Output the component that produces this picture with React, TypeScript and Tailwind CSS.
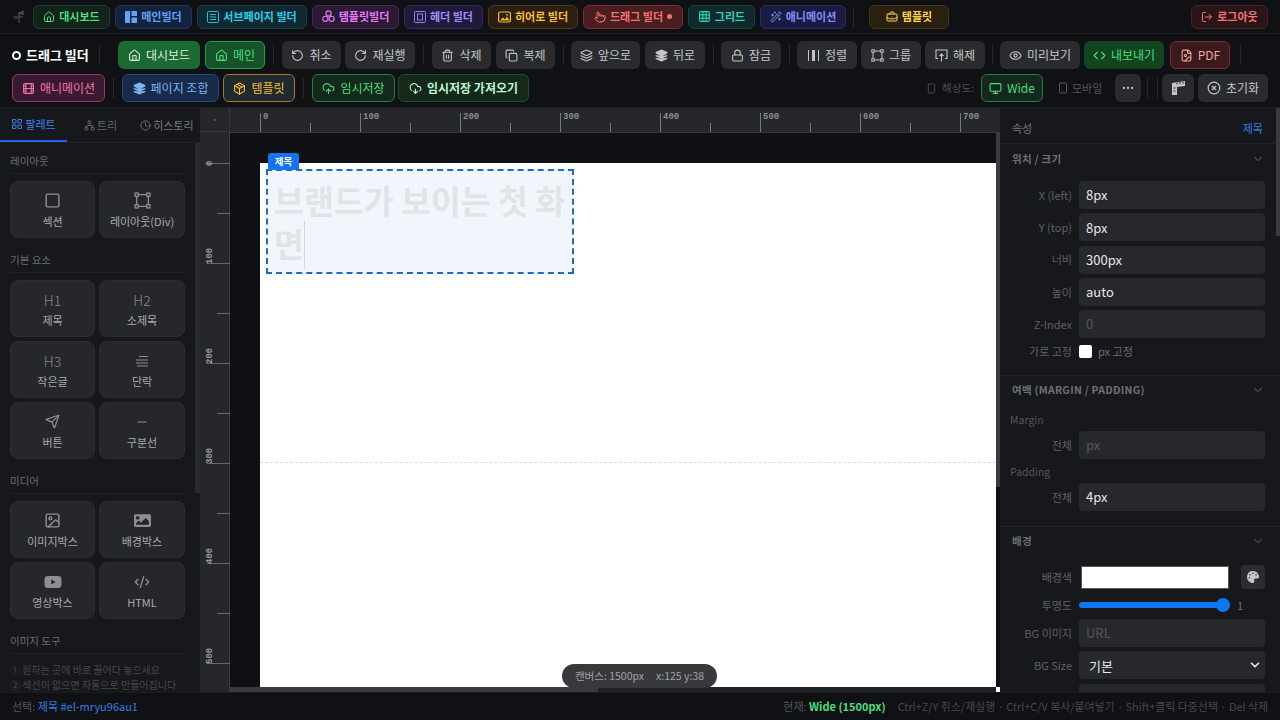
import type { ReactNode } from "react";
import {
  ChevronDown, CircleX, Clock, CodeXml, Copy, Code, CloudDownload, CloudUpload, Ellipsis, Eye, FileImage,
  Film, Grid3x3, House, Image, Layers, LayoutGrid, Lock, LogOut, Minus, Monitor, Network, Package,
  Pointer, RotateCcw, RotateCw, Send, Smartphone, Square, Trash2, WandSparkles, BriefcaseBusiness,
} from "lucide-react";
import { FaPalette, FaYoutube, FaImage } from "react-icons/fa";

const font = { fontFamily: '"Noto Sans CJK KR", "Noto Sans", sans-serif' };

// icons the packages don't have in this shape
function CornerBox({ size = 13 }: { size?: number }) {
  return (
    <svg width={size} height={size} viewBox="0 0 16 16" fill="none" stroke="currentColor" strokeWidth="1.2">
      <rect x="1" y="1" width="3" height="3" /><rect x="12" y="1" width="3" height="3" />
      <rect x="1" y="12" width="3" height="3" /><rect x="12" y="12" width="3" height="3" />
      <path d="M4 2.5h8M4 13.5h8M2.5 4v8M13.5 4v8" />
    </svg>
  );
}

function SplitBlocks() {
  return (
    <svg width="12" height="12" viewBox="0 0 12 12" fill="currentColor">
      <rect x="0" y="0" width="5" height="12" rx="0.5" /><rect x="6.5" y="0" width="5.5" height="5" rx="0.5" /><rect x="6.5" y="6.5" width="5.5" height="5.5" rx="0.5" />
    </svg>
  );
}

function FramedLines() {
  return (
    <svg width="12" height="12" viewBox="0 0 12 12" fill="none" stroke="currentColor" strokeWidth="0.9">
      <rect x="0.5" y="0.5" width="11" height="11" rx="1" /><path d="M3 3.5h6M3 6h6M3 8.5h6" />
    </svg>
  );
}

function HeaderBox() {
  return (
    <svg width="12" height="12" viewBox="0 0 12 12" fill="none" stroke="currentColor" strokeWidth="0.9">
      <rect x="0.5" y="0.5" width="11" height="11" rx="1" /><rect x="3.5" y="3" width="5" height="6" />
    </svg>
  );
}

function Clover() {
  return (
    <svg width="13" height="13" viewBox="0 0 13 13" fill="none" stroke="currentColor" strokeWidth="1.1">
      <circle cx="6.5" cy="3.5" r="2.6" /><circle cx="3.4" cy="8.8" r="2.6" /><circle cx="9.6" cy="8.8" r="2.6" />
    </svg>
  );
}

function HeroPic() {
  return (
    <svg width="13" height="12" viewBox="0 0 13 12" fill="none" stroke="currentColor" strokeWidth="1.2">
      <rect x="0.6" y="1" width="11.8" height="10" rx="1.5" />
      <path d="M2 9.5l3-3 2 2 2-3 2.5 4z" fill="currentColor" stroke="none" />
      <circle cx="9" cy="3.8" r="0.9" fill="currentColor" stroke="none" />
    </svg>
  );
}

function Ungroup() {
  return (
    <svg width="13" height="13" viewBox="0 0 13 13" fill="none" stroke="currentColor" strokeWidth="1.1">
      <path d="M3 9.5H1V1h11v8.5h-2" /><path d="M6.5 12.5V5M4.5 7l2-2 2 2" />
    </svg>
  );
}

function CornerRuler() {
  return (
    <svg width="13" height="14" viewBox="0 0 13 14" fill="currentColor">
      <path d="M0 2l13-2v5L5 6v8H0z" />
      <path d="M5 1.5v2M8 1v2M11 .8v2M1.5 7h2M1.5 10h2" stroke="#2a2b2f" strokeWidth="1" />
    </svg>
  );
}

function NavBtn({ className, children }: { className: string; children: ReactNode }) {
  return (
    <div className={"h-[24px] flex items-center justify-center gap-1 rounded-md border text-[11px] font-semibold whitespace-nowrap " + className}>
      {children}
    </div>
  );
}

function Tool({ className, children }: { className: string; children: ReactNode }) {
  return (
    <div className={"h-[28px] flex items-center justify-center gap-[5px] rounded-md text-xs whitespace-nowrap " + className}>
      {children}
    </div>
  );
}

const gray = "bg-[#2a2b2f] text-[#c4c5c8]";

function Sep({ className = "" }: { className?: string }) {
  return <div className={"w-px h-[20px] bg-[#26272b] shrink-0 " + className} />;
}

function TopNav() {
  return (
    <div className="h-[34px] flex items-center pl-[12px] pr-[12px] border-b border-[#1e1f23] bg-[#101114]">
      <svg width="14" height="14" viewBox="0 0 14 14" className="mr-[7px] text-[#55565a]" fill="none" stroke="currentColor" strokeWidth="1.1">
        <path d="M1 7h10M7 3v10M7 3l4-1.5v3zM4 7v2.5" />
      </svg>
      <div className="flex items-center gap-[5px]">
        <NavBtn className="w-[77px] bg-[#11231a] border-[#1c3f2b] text-[#4ade80]"><House size={12} />대시보드</NavBtn>
        <NavBtn className="w-[77px] bg-[#14233d] border-[#1d3560] text-[#60a5fa]"><SplitBlocks />메인빌더</NavBtn>
        <NavBtn className="w-[110px] bg-[#10282f] border-[#15414c] text-[#22d3ee]"><FramedLines />서브페이지 빌더</NavBtn>
        <NavBtn className="w-[87px] bg-[#2a1a33] border-[#48285a] text-[#e879f9]"><Clover />템플릿빌더</NavBtn>
        <NavBtn className="w-[79px] bg-[#1f1a3a] border-[#33295f] text-[#a78bfa]"><HeaderBox />헤더 빌더</NavBtn>
        <NavBtn className="w-[90px] bg-[#2a1f10] border-[#4d3717] text-[#fbbf24]"><HeroPic />히어로 빌더</NavBtn>
        <NavBtn className="w-[100px] bg-[#4a1d20] border-[#7a2c30] text-[#f87171]"><Pointer size={12} />드래그 빌더<span className="w-[5px] h-[5px] rounded-full bg-[#f87171]" /></NavBtn>
        <NavBtn className="w-[67px] bg-[#10292a] border-[#174244] text-[#2dd4bf]"><Grid3x3 size={13} />그리드</NavBtn>
        <NavBtn className="w-[86px] bg-[#1a1b40] border-[#2a2b66] text-[#818cf8]"><WandSparkles size={12} />애니메이션</NavBtn>
      </div>
      <Sep className="ml-[7px] mr-[15px]" />
      <NavBtn className="w-[80px] bg-[#2a2010] border-[#45351a] text-[#fcd34d]"><BriefcaseBusiness size={12} />템플릿</NavBtn>
      <NavBtn className="w-[77px] ml-auto bg-[#2a1519] border-[#482126] text-[#f87171]"><LogOut size={12} />로그아웃</NavBtn>
    </div>
  );
}

function ToolRowOne() {
  return (
    <div className="h-[28px] flex items-center">
      <div className="w-[87px] ml-[12px] flex items-center gap-[5px] text-[13px] font-bold text-white whitespace-nowrap">
        <span className="w-[9px] h-[9px] rounded-full border-2 border-white" />드래그 빌더
      </div>
      <Sep className="mr-[18px]" />
      <Tool className="w-[82px] bg-[#1c6a33] text-[#d5efdc]"><House size={13} />대시보드</Tool>
      <Tool className="w-[60px] ml-[5px] bg-[#16522a] border border-[#22a04d] text-[#4ade80]"><House size={13} />메인</Tool>
      <Sep className="mx-[8px]" />
      <div className="flex gap-[4px]">
        <Tool className={"w-[59px] " + gray}><RotateCcw size={13} />취소</Tool>
        <Tool className={"w-[70px] " + gray}><RotateCw size={13} />재실행</Tool>
      </div>
      <Sep className="mx-[8px]" />
      <div className="flex gap-[5px]">
        <Tool className={"w-[59px] " + gray}><Trash2 size={13} />삭제</Tool>
        <Tool className={"w-[59px] " + gray}><Copy size={13} />복제</Tool>
      </div>
      <Sep className="ml-[8px] mr-[7px]" />
      <div className="flex gap-[5px]">
        <Tool className={"w-[69px] " + gray}><Layers size={13} />앞으로</Tool>
        <Tool className={"w-[60px] " + gray}><Layers size={13} fill="currentColor" />뒤로</Tool>
      </div>
      <Sep className="ml-[8px] mr-[7px]" />
      <Tool className={"w-[60px] " + gray}><Lock size={13} />잠금</Tool>
      <Sep className="ml-[8px] mr-[7px]" />
      <div className="flex gap-[4px]">
        <Tool className={"w-[60px] " + gray}>
          <svg width="13" height="13" viewBox="0 0 13 13" fill="currentColor"><rect x="1" y="1" width="1" height="11" /><rect x="5" y="1" width="3" height="11" /><rect x="11" y="1" width="1" height="11" /></svg>
          정렬
        </Tool>
        <Tool className={"w-[60px] " + gray}><CornerBox />그룹</Tool>
        <Tool className={"w-[60px] " + gray}><Ungroup />해제</Tool>
      </div>
      <Sep className="ml-[7px] mr-[7px]" />
      <Tool className={"w-[80px] " + gray}><Eye size={13} />미리보기</Tool>
      <Tool className="w-[80px] ml-[4px] bg-[#12451f] text-[#4ade80]"><Code size={13} />내보내기</Tool>
      <Tool className="w-[60px] ml-[6px] bg-[#3c1a1c] border border-[#7a2c30] text-[#f0a5a5]"><FileImage size={13} />PDF</Tool>
      <Sep className="ml-[10px]" />
    </div>
  );
}

function ToolRowTwo() {
  return (
    <div className="h-[28px] flex items-center mt-[5px] pl-[12px] pr-[12px]">
      <Tool className="w-[93px] bg-[#3a1a2e] border border-[#8c3a6b] text-[#f472b6]"><Film size={13} />애니메이션</Tool>
      <Sep className="mx-[8px]" />
      <Tool className="w-[97px] bg-[#172a48] border border-[#24477c] text-[#7db4f8]"><Layers size={13} fill="currentColor" />페이지 조합</Tool>
      <Tool className="w-[72px] ml-[4px] bg-[#1f2a30] border border-[#a8752a] text-[#fbbf24]"><Package size={13} />템플릿</Tool>
      <Sep className="mx-[8px]" />
      <Tool className="w-[83px] bg-[#15281c] border border-[#22803f] text-[#4ade80]"><CloudUpload size={13} />임시저장</Tool>
      <Tool className="w-[131px] ml-[3px] bg-[#15281c] border border-[#1f4a2e] text-[#bbf7d0] font-semibold"><CloudDownload size={13} />임시저장 가져오기</Tool>
      <div className="ml-auto flex items-center text-[10.5px] text-[#4f5054] gap-[5px]"><Smartphone size={11} />해상도:</div>
      <Tool className="w-[62px] ml-[7px] bg-[#15281c] border border-[#22803f] text-[#4ade80]"><Monitor size={13} />Wide</Tool>
      <div className="w-[46px] ml-[14px] flex items-center gap-[3px] text-[11px] text-[#55565a] whitespace-nowrap"><Smartphone size={12} />모바일</div>
      <Tool className={"w-[26px] ml-[12px] " + gray}><Ellipsis size={14} /></Tool>
      <Sep className="ml-[6px] mr-[9px]" />
      <Sep className="mr-[4px]" />
      <Tool className={"w-[32px] text-[#c4c5c8] " + gray}><CornerRuler /></Tool>
      <Tool className={"w-[70px] ml-[4px] " + gray}><CircleX size={14} />초기화</Tool>
    </div>
  );
}

function SectionLabel({ children }: { children: ReactNode }) {
  return <div className="text-[10.5px] leading-[14px] text-[#6b6c70] pb-[5px] mb-[7px] border-b border-[#212226]">{children}</div>;
}

function Card({ icon, label }: { icon: ReactNode; label: string }) {
  return (
    <div className="h-[57px] rounded-lg bg-[#26272b] border border-[#2c2d31] flex flex-col items-center justify-center gap-[3px] text-[#9a9b9e]">
      <div className="h-[20px] flex items-center justify-center text-[#8e8f92]">{icon}</div>
      <div className="text-[11px] leading-[15px] text-[#a9aaad]">{label}</div>
    </div>
  );
}

const H = ({ t }: { t: string }) => <span className="text-sm font-light text-[#85868a]">{t}</span>;

function TextLines() {
  return (
    <svg width="16" height="14" viewBox="0 0 16 14" fill="none" stroke="currentColor" strokeWidth="1">
      <path d="M5 2.5h9M2 6h12M2 9h12M3 12h11" />
    </svg>
  );
}

function Palette() {
  return (
    <aside className="w-[200px] shrink-0 flex flex-col bg-[#17181c] overflow-hidden">
      <div className="h-[35px] flex items-center text-[11px] border-b border-[#212226] shrink-0">
        <div className="w-[67px] h-full flex items-center justify-center gap-[2px] text-[#3b82f6] border-b-2 border-[#2563eb]"><LayoutGrid size={12} />팔레트</div>
        <div className="w-[67px] flex items-center justify-center gap-[2px] text-[#66676b]"><Network size={11} />트리</div>
        <div className="w-[66px] flex items-center justify-center gap-[2px] text-[#77787c] whitespace-nowrap"><Clock size={11} />히스토리</div>
      </div>
      <div className="flex-1 flex min-h-0">
        <div className="w-[195px] h-[549px] px-[10px] pt-[11px] overflow-hidden">
          <SectionLabel>레이아웃</SectionLabel>
          <div className="grid grid-cols-[85px_86px] gap-[4px]">
            <Card icon={<Square size={17} />} label="섹션" />
            <Card icon={<CornerBox size={17} />} label="레이아웃(Div)" />
          </div>
          <div className="mt-[15px]"><SectionLabel>기본 요소</SectionLabel></div>
          <div className="grid grid-cols-[85px_86px] gap-[4px]">
            <Card icon={<H t="H1" />} label="제목" />
            <Card icon={<H t="H2" />} label="소제목" />
            <Card icon={<H t="H3" />} label="작은글" />
            <Card icon={<TextLines />} label="단락" />
            <Card icon={<Send size={15} />} label="버튼" />
            <Card icon={<Minus size={14} />} label="구분선" />
          </div>
          <div className="mt-[15px]"><SectionLabel>미디어</SectionLabel></div>
          <div className="grid grid-cols-[85px_86px] gap-[4px]">
            <Card icon={<Image size={17} />} label="이미지박스" />
            <Card icon={<FaImage size={17} />} label="배경박스" />
            <Card icon={<FaYoutube size={18} />} label="영상박스" />
            <Card icon={<CodeXml size={16} />} label="HTML" />
          </div>
          <div className="mt-[15px]"><SectionLabel>이미지 도구</SectionLabel></div>
          <div className="mt-[8px] text-[10px] leading-[15px] text-[#46474b] whitespace-nowrap">
            <div>① 원하는 곳에 바로 끌어다 놓으세요</div>
            <div>② 섹션이 없으면 자동으로 만들어집니다</div>
          </div>
        </div>
        <div className="w-[5px] h-[350px] bg-[#2a2b2f]" />
      </div>
    </aside>
  );
}

const topMarks = Array.from({ length: 16 }, (_, i) => i * 50);
const leftMarks = Array.from({ length: 12 }, (_, i) => i * 50);

function Rulers() {
  return (
    <>
      <div className="absolute left-0 top-0 w-[30px] h-[24px] bg-[#26272b] border-r border-b border-[#38393d] flex items-center justify-center text-[8px] text-[#55565a]">▪</div>
      <svg className="absolute left-[30px] top-0" width="770" height="25">
        <rect width="770" height="24" fill="#26272b" />
        <rect y="24" width="770" height="1" fill="#3a3b3f" />
        {topMarks.map((m) => (
          <g key={m}>
            <rect x={30 + m} y={m % 100 === 0 ? 5 : 15} width="1" height={m % 100 === 0 ? 19 : 9} fill="#77787c" />
            {m % 100 === 0 && <text x={33 + m} y="11" fontSize="9" fontWeight="700" fontFamily="Liberation Mono, monospace" fill="#8a8b8f">{m}</text>}
          </g>
        ))}
      </svg>
      <svg className="absolute left-0 top-[24px]" width="30" height="560">
        <rect width="30" height="560" fill="#26272b" />
        <rect x="29" width="1" height="560" fill="#3a3b3f" />
        {leftMarks.map((m) => (
          <g key={m}>
            <rect x={m % 100 === 0 ? 7 : 17} y={31 + m} width={m % 100 === 0 ? 23 : 13} height="1" fill="#66676b" />
            {m % 100 === 0 && <text transform={`translate(12 ${m === 0 ? 34 : 32 + m}) rotate(-90)`} fontSize="9" fontWeight="700" fontFamily="Liberation Mono, monospace" fill="#9a9b9f">{m}</text>}
          </g>
        ))}
      </svg>
    </>
  );
}

function Canvas() {
  return (
    <main className="relative w-[800px] shrink-0 bg-[#0f1014] overflow-hidden">
      <Rulers />
      <div className="absolute left-[60px] top-[55px] w-[736px] h-[524px] bg-white">
        <div className="absolute left-0 right-0 top-[299px] border-t border-dashed border-[#cfe2f5]" />
        <div className="absolute left-[8px] top-[-10px] h-[17px] w-[31px] rounded-t-[3px] bg-[#1473f0] text-white text-[9.5px] font-bold flex items-center justify-center z-10">제목</div>
        <div className="absolute left-[6px] top-[6px] w-[308px] h-[105px] border-2 border-dashed border-[#1f6bc4] bg-[#f1f6fd] pl-[6px] pt-[7px]">
          <div className="text-[32.5px] leading-[43px] font-bold text-[#e1e3e6]">
            브랜드가 보이는 첫 화면<span className="inline-block w-px h-[48px] bg-[#d6d8db] align-top" />
          </div>
        </div>
      </div>
      <div className="absolute left-[30px] right-[4px] bottom-0 h-[5px] bg-[#222327]">
        <div className="w-[368px] h-full bg-[#3a3b3f]" />
      </div>
      <div className="absolute right-0 top-[24px] w-[4px] h-[355px] bg-[#3a3b3f]" />
      <div className="absolute left-[796px] top-[579px] w-[5px] h-[5px] bg-white" />
      <div className="absolute left-[362px] top-[556px] w-[155px] h-[24px] rounded-full bg-[#38393c] flex items-center justify-center gap-[12px] text-[10.5px] text-[#a0a1a4]">
        <span>캔버스: 1500px</span><span>x:125 y:38</span>
      </div>
    </main>
  );
}

function Field({ label, value, dim }: { label: string; value: string; dim?: boolean }) {
  return (
    <div className="flex items-center h-[28px]">
      <div className="w-[79px] pr-[7px] text-right text-[11px] text-[#5f6064] whitespace-nowrap">{label}</div>
      <div className={"flex-1 h-full rounded bg-[#27282c] px-[7px] flex items-center text-[13px] " + (dim ? "text-[#55565a]" : "text-[#e5e6e8]")}>{value}</div>
    </div>
  );
}

function GroupHead({ title, className = "" }: { title: string; className?: string }) {
  return (
    <div className={"flex items-center justify-between pl-[12px] pr-[15px] h-[16px] text-[10.5px] font-semibold tracking-wide text-[#6f7074] " + className}>
      {title}<ChevronDown size={14} className="text-[#45464a]" />
    </div>
  );
}

function Props() {
  return (
    <aside className="w-[280px] shrink-0 relative bg-[#17181c] overflow-hidden">
      <div className="h-[36px] pt-[5px] flex items-center justify-between pl-[12px] pr-[17px] border-b border-[#222327] text-[11px]">
        <span className="text-[#75767a]">속성</span><span className="text-[#2f7fe0]">제목</span>
      </div>
      <GroupHead title="위치 / 크기" className="mt-[7px]" />
      <div className="pr-[15px] mt-[14px] flex flex-col gap-[4.25px]">
        <Field label="X (left)" value="8px" />
        <Field label="Y (top)" value="8px" />
        <Field label="너비" value="300px" />
        <Field label="높이" value="auto" />
        <Field label="Z-Index" value="0" dim />
      </div>
      <div className="flex items-center h-[20px] mt-[3px] text-[11px]">
        <div className="w-[79px] pr-[7px] text-right text-[#5f6064] whitespace-nowrap">가로 고정</div>
        <span className="w-[13px] h-[13px] rounded-[2px] bg-white" />
        <span className="ml-[6px] text-[#6f7074]">px 고정</span>
      </div>
      <div className="mt-[14px] border-t border-[#202125]" />
      <GroupHead title="여백 (MARGIN / PADDING)" className="mt-[6px]" />
      <div className="pr-[15px] pl-[10px] mt-[15px] mb-[4px] text-[10.5px] leading-[14px] text-[#55565a]">Margin</div>
      <div className="pr-[15px]"><Field label="전체" value="px" dim /></div>
      <div className="pl-[10px] mt-[6px] mb-[4px] text-[10.5px] leading-[14px] text-[#55565a]">Padding</div>
      <div className="pr-[15px]"><Field label="전체" value="4px" /></div>
      <div className="mt-[15px] border-t border-[#202125]" />
      <GroupHead title="배경" className="mt-[6px]" />
      <div className="mt-[16px] pr-[15px] flex items-center h-[24px]">
        <div className="w-[79px] pr-[7px] text-right text-[11px] text-[#5f6064]">배경색</div>
        <div className="ml-[2px] w-[148px] h-[23px] bg-white border border-[#55565a]" />
        <div className="ml-auto w-[24px] h-[24px] rounded bg-[#2c2d31] flex items-center justify-center text-[#c4c5c8]"><FaPalette size={12} /></div>
      </div>
      <div className="mt-[2px] pr-[15px] flex items-center h-[28px]">
        <div className="w-[79px] pr-[7px] text-right text-[11px] text-[#5f6064]">투명도</div>
        <div className="relative w-[151px] h-[6px] rounded-full bg-[#0d78f2]">
          <span className="absolute right-0 top-[-4px] w-[14px] h-[14px] rounded-full bg-[#0d78f2]" />
        </div>
        <span className="ml-[7px] text-[11px] text-[#6f7074]">1</span>
      </div>
      <div className="pr-[15px] flex flex-col gap-[4.25px] mt-0">
        <Field label="BG 이미지" value="URL" dim />
        <div className="flex items-center h-[28px]">
          <div className="w-[79px] pr-[7px] text-right text-[11px] text-[#5f6064]">BG Size</div>
          <div className="flex-1 h-full rounded bg-[#27282c] pl-[10px] pr-[3px] flex items-center justify-between text-[13px] text-[#e5e6e8]">기본<ChevronDown size={14} strokeWidth={3} /></div>
        </div>
        <Field label="" value="" />
      </div>
      <div className="absolute right-0 top-0 w-[4px] h-[128px] bg-[#3a3b3f]" />
    </aside>
  );
}

function StatusBar() {
  return (
    <div className="h-[28px] flex items-center justify-between pl-[12px] pr-[12px] bg-[#101114] border-t border-[#1c1d21] text-[11px] whitespace-nowrap">
      <div className="text-[#55565a]">선택: <span className="text-[#2f7fe0]">제목 #el-mryu96au1</span></div>
      <div className="flex items-center gap-[12px] text-[#47484c]">
        <span className="text-[#55565a]">현재: <span className="text-[#4ade80] font-semibold">Wide (1500px)</span></span>
        <span className="text-[10.9px]">Ctrl+Z/Y 취소/재실행 · Ctrl+C/V 복사/붙여넣기 · Shift+클릭 다중선택 · Del 삭제</span>
      </div>
    </div>
  );
}

export default function App() {
  return (
    <div style={font} className="w-[1280px] h-[720px] flex flex-col overflow-hidden bg-[#101114]">
      <TopNav />
      <div className="h-[74px] pt-[7px] border-b border-[#1e1f23] shrink-0">
        <ToolRowOne />
        <ToolRowTwo />
      </div>
      <div className="flex-1 flex min-h-0">
        <Palette />
        <Canvas />
        <Props />
      </div>
      <StatusBar />
    </div>
  );
}
